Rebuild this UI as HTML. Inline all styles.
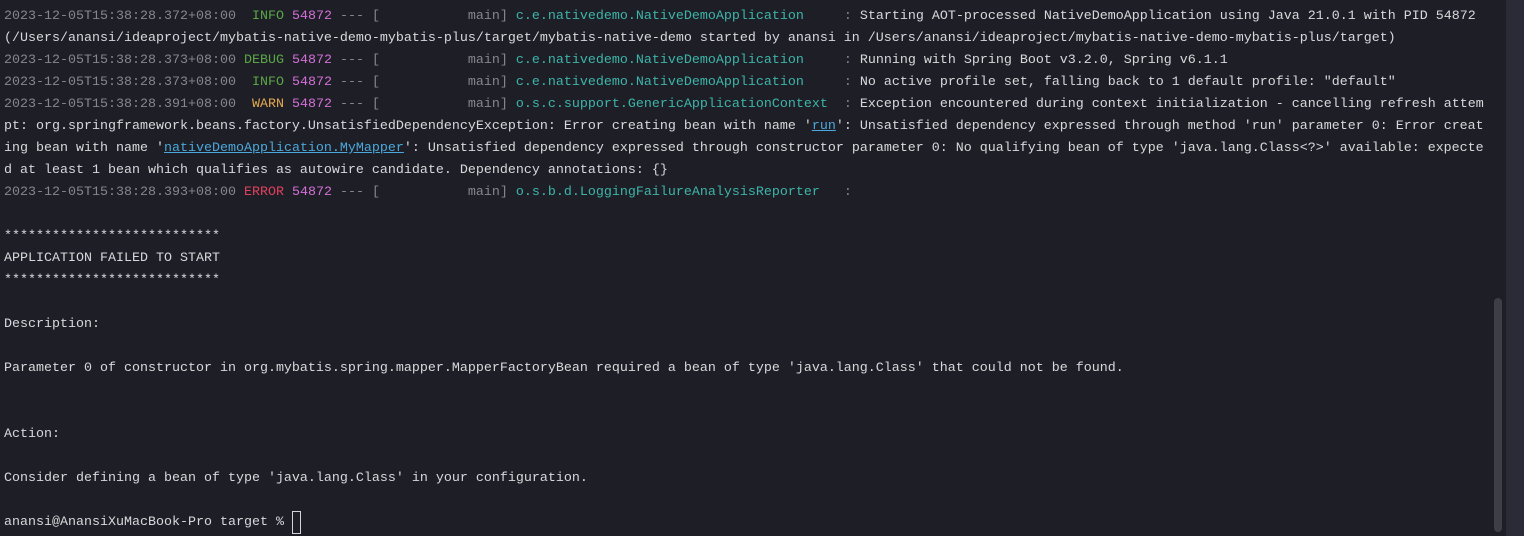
<!DOCTYPE html>
<html><head><meta charset="utf-8"><style>
html,body{margin:0;padding:0;width:1524px;height:536px;overflow:hidden;background:#1e1f26;}
pre{position:absolute;left:4px;top:6px;margin:0;font-family:"Liberation Mono",monospace;font-size:13.33px;line-height:22px;color:#d8d8dc;white-space:pre;}
.t{color:#86868c}.g{color:#5aa646}.w{color:#e5a84f}.e{color:#e0405e}.p{color:#d46fd8}.f{color:#86868c}.c{color:#3db4aa}
.l{color:#4aa8dc;text-decoration:underline}
#strip{position:absolute;left:1506px;top:0;width:18px;height:536px;background:#2b2b37}
#sb{position:absolute;left:1494px;top:298px;width:8px;height:234px;border-radius:4px;background:#3e3e46}
#cur{position:absolute;left:292px;top:511px;width:9px;height:23px;border:1px solid #d4d4d8;box-sizing:border-box}
</style></head><body>
<div id="strip"></div><div id="sb"></div>
<pre><span class="t">2023-12-05T15:38:28.372+08:00</span>  <span class="g">INFO</span> <span class="p">54872</span> <span class="f">--- [           main]</span> <span class="c">c.e.nativedemo.NativeDemoApplication    </span> <span class="f">:</span> Starting AOT-processed NativeDemoApplication using Java 21.0.1 with PID 54872
(/Users/anansi/ideaproject/mybatis-native-demo-mybatis-plus/target/mybatis-native-demo started by anansi in /Users/anansi/ideaproject/mybatis-native-demo-mybatis-plus/target)
<span class="t">2023-12-05T15:38:28.373+08:00</span> <span class="g">DEBUG</span> <span class="p">54872</span> <span class="f">--- [           main]</span> <span class="c">c.e.nativedemo.NativeDemoApplication    </span> <span class="f">:</span> Running with Spring Boot v3.2.0, Spring v6.1.1
<span class="t">2023-12-05T15:38:28.373+08:00</span>  <span class="g">INFO</span> <span class="p">54872</span> <span class="f">--- [           main]</span> <span class="c">c.e.nativedemo.NativeDemoApplication    </span> <span class="f">:</span> No active profile set, falling back to 1 default profile: "default"
<span class="t">2023-12-05T15:38:28.391+08:00</span>  <span class="w">WARN</span> <span class="p">54872</span> <span class="f">--- [           main]</span> <span class="c">o.s.c.support.GenericApplicationContext </span> <span class="f">:</span> Exception encountered during context initialization - cancelling refresh attem
pt: org.springframework.beans.factory.UnsatisfiedDependencyException: Error creating bean with name '<span class="l">run</span>': Unsatisfied dependency expressed through method 'run' parameter 0: Error creat
ing bean with name '<span class="l">nativeDemoApplication.MyMapper</span>': Unsatisfied dependency expressed through constructor parameter 0: No qualifying bean of type 'java.lang.Class&lt;?&gt;' available: expecte
d at least 1 bean which qualifies as autowire candidate. Dependency annotations: {}
<span class="t">2023-12-05T15:38:28.393+08:00</span> <span class="e">ERROR</span> <span class="p">54872</span> <span class="f">--- [           main]</span> <span class="c">o.s.b.d.LoggingFailureAnalysisReporter  </span> <span class="f">:</span>

***************************
APPLICATION FAILED TO START
***************************

Description:

Parameter 0 of constructor in org.mybatis.spring.mapper.MapperFactoryBean required a bean of type 'java.lang.Class' that could not be found.


Action:

Consider defining a bean of type 'java.lang.Class' in your configuration.

anansi@AnansiXuMacBook-Pro target % </pre>
<div id="cur"></div>
</body></html>
